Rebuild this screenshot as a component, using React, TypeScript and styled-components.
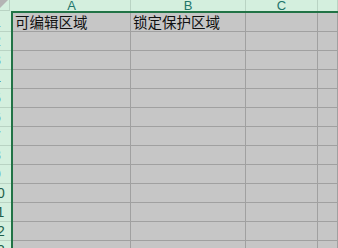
import React from 'react';
import styled, { createGlobalStyle } from 'styled-components';

const GlobalStyle = createGlobalStyle`
  html, body {
    margin: 0;
    padding: 0;
    background: #c6c6c6;
  }
`;

const EXCEL_GREEN = '#217346';
const HEADER_BG = '#d4efde';
const HEADER_LINE = '#b9d3c3';
const GRID_BG = '#c6c6c6';
const GRID_LINE = '#a0a0a0';

const columns = [
  { label: 'A', width: 118 },
  { label: 'B', width: 115 },
  { label: 'C', width: 72 },
  { label: 'D', width: 0 },
];

const rowCount = 13;

const cellValues: Record<string, string> = {
  'A1': '可编辑区域',
  'B1': '锁定保护区域',
};

const gridTemplate = columns.map((c) => (c.width ? `${c.width}px` : '1fr')).join(' ');

const Sheet = styled.div`
  width: 338px;
  height: 248px;
  overflow: hidden;
  display: grid;
  grid-template-columns: 11px 1fr;
  grid-template-rows: 13px 1fr;
  background: ${GRID_BG};
`;

const Corner = styled.div`
  background: ${HEADER_BG};
`;

const SelectAll = styled.div`
  width: 9px;
  height: 10px;
  border-right: 1px solid ${HEADER_LINE};
  border-bottom: 1px solid ${HEADER_LINE};
  svg {
    display: block;
  }
`;

const ColumnHeaders = styled.div`
  box-sizing: border-box;
  height: 13px;
  padding-left: 2px;
  border-bottom: 2px solid ${EXCEL_GREEN};
  background: ${HEADER_BG};
  display: grid;
  grid-template-columns: ${gridTemplate};
`;

const ColumnHeader = styled.div`
  box-sizing: border-box;
  height: 11px;
  border-right: 1px solid ${HEADER_LINE};
  display: flex;
  justify-content: center;
  overflow: hidden;
  font-family: "Liberation Sans", Arial, sans-serif;
  font-size: 13px;
  line-height: 11px;
  color: #22756a;
`;

const RowHeaders = styled.div`
  display: flex;
  flex-direction: column;
  background: ${HEADER_BG};
`;

const RowHeader = styled.div`
  box-sizing: border-box;
  height: 19px;
  flex-shrink: 0;
  padding-right: 2px;
  border-bottom: 1px solid ${HEADER_LINE};
  display: flex;
  align-items: center;
  justify-content: flex-end;
  overflow: hidden;
`;

// the header is wider than what shows; numbers sit centred in the full width
const RowNumber = styled.span`
  flex-shrink: 0;
  width: 24px;
  text-align: center;
  font-family: "Liberation Sans", Arial, sans-serif;
  font-size: 14px;
  color: #1f5f4a;
  white-space: nowrap;
`;

const Body = styled.div`
  border-left: 2px solid ${EXCEL_GREEN};
  display: flex;
  flex-direction: column;
`;

const Row = styled.div`
  display: grid;
  grid-template-columns: ${gridTemplate};
  flex-shrink: 0;
`;

const Cell = styled.div`
  box-sizing: border-box;
  height: 19px;
  padding-left: 2px;
  border-right: 1px solid ${GRID_LINE};
  border-bottom: 1px solid ${GRID_LINE};
  display: flex;
  align-items: center;
  overflow: hidden;
  white-space: nowrap;
  font-family: "Noto Sans CJK SC", "Liberation Sans", sans-serif;
  font-size: 14.5px;
  line-height: 18px;
  color: #111;
`;

const App: React.FC = () => {
  const rows = Array.from({ length: rowCount }, (_, i) => i + 1);

  return (
    <>
      <GlobalStyle />
      <Sheet>
        <Corner>
          <SelectAll>
            <svg width="9" height="10" viewBox="0 0 9 10">
              <polygon points="0,0 8,0 0,8" fill="#b4b4b4" />
            </svg>
          </SelectAll>
        </Corner>
        <ColumnHeaders>
          {columns.map((col) => (
            <ColumnHeader key={col.label}>{col.label === 'D' ? '' : col.label}</ColumnHeader>
          ))}
        </ColumnHeaders>
        <RowHeaders>
          {rows.map((r) => (
            <RowHeader key={r}>
              <RowNumber>{r}</RowNumber>
            </RowHeader>
          ))}
        </RowHeaders>
        <Body>
          {rows.map((r) => (
            <Row key={r}>
              {columns.map((col) => (
                <Cell key={col.label}>{cellValues[`${col.label}${r}`]}</Cell>
              ))}
            </Row>
          ))}
        </Body>
      </Sheet>
    </>
  );
};

export default App;
